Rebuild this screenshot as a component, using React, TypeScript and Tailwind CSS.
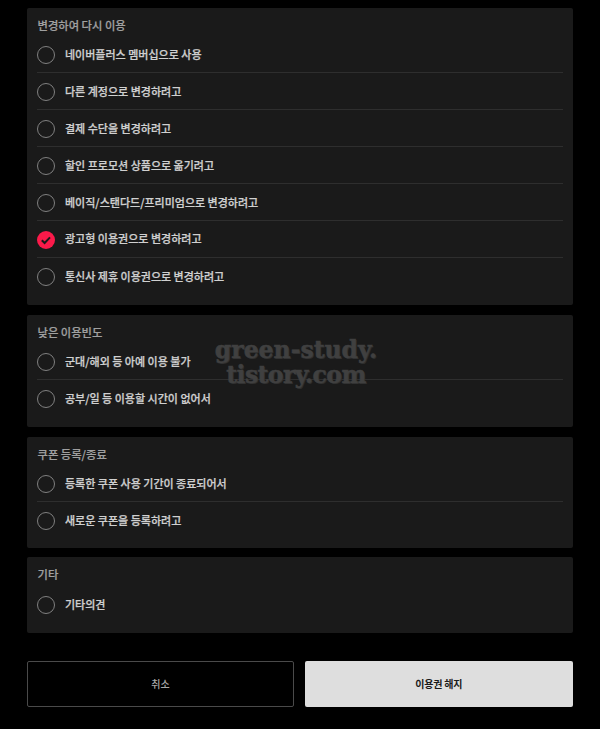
const sections = [
  {
    title: "변경하여 다시 이용",
    pb: "pb-[10.5px]",
    items: [
      "네이버플러스 멤버십으로 사용",
      "다른 계정으로 변경하려고",
      "결제 수단을 변경하려고",
      "할인 프로모션 상품으로 옮기려고",
      "베이직/스탠다드/프리미엄으로 변경하려고",
      "광고형 이용권으로 변경하려고",
      "통신사 제휴 이용권으로 변경하려고",
    ],
  },
  {
    title: "낮은 이용빈도",
    pb: "pb-[10.5px]",
    items: ["군대/해외 등 아예 이용 불가", "공부/일 등 이용할 시간이 없어서"],
  },
  {
    title: "쿠폰 등록/종료",
    pb: "pb-[9px]",
    items: ["등록한 쿠폰 사용 기간이 종료되어서", "새로운 쿠폰을 등록하려고"],
  },
  {
    title: "기타",
    pb: "pb-[10px]",
    items: ["기타의견"],
  },
]

const CHECKED = "광고형 이용권으로 변경하려고"

function Radio({ checked }: { checked: boolean }) {
  if (checked) {
    return (
      <svg width="18" height="18" viewBox="0 0 18 18" className="shrink-0">
        <circle cx="9" cy="9" r="9" fill="#fb1a4a" />
        <path d="M4.8 9.2l2.8 2.8 5.4-5.6" fill="none" stroke="#1a1a1a" strokeWidth="2" />
      </svg>
    )
  }
  return <span className="w-[18px] h-[18px] shrink-0 rounded-full border border-[#808080]" />
}

export default function App() {
  return (
    <div
      className="relative w-[600px] h-[729px] bg-black overflow-hidden"
      style={{ fontFamily: '"Noto Sans CJK KR", "Noto Sans", sans-serif' }}
    >
      <div className="flex flex-col gap-[9.4px] pt-2 px-[27px]">
        {sections.map((section) => (
          <div key={section.title} className={`bg-[#1a1a1a] rounded-[2px] px-[10px] pt-[9px] ${section.pb}`}>
            <h3 className="text-[11.3px] leading-4 font-medium text-[#a0a0a0] pl-[0.5px] mb-[3.5px] [-webkit-text-stroke:0.2px_#a0a0a0]">
              {section.title}
            </h3>
            <ul>
              {section.items.map((item, i) => (
                <li
                  key={item}
                  className={`h-[36.9px] pt-[1.5px] flex items-center gap-[10px] ${
                    i < section.items.length - 1 ? "border-b border-[#2e2e2e]" : ""
                  }`}
                >
                  <Radio checked={item === CHECKED} />
                  <span className="text-[11px] font-medium text-[#d0d0d0] -mt-[2px] [-webkit-text-stroke:0.25px_#d0d0d0]">
                    {item}
                  </span>
                </li>
              ))}
            </ul>
          </div>
        ))}
      </div>

      <div className="flex gap-[11px] pl-[27px] mt-[28px]">
        <button className="w-[267px] h-[46px] rounded-[2px] border border-[#4a4a4a] bg-black text-[10px] font-medium text-[#a8a8a8]">
          취소
        </button>
        <button className="w-[267.5px] h-[46px] rounded-[2px] bg-[#dedede] text-[10px] font-bold text-[#1a1a1a] tracking-[-0.2px]">
          이용권 해지
        </button>
      </div>

      <div
        className="absolute left-[196px] top-[338px] w-[200px] text-center text-[23.5px] leading-[25px] font-bold text-[#404040] [-webkit-text-stroke:0.5px_#404040] [text-shadow:1px_1px_0_#2e2e2e]"
        style={{ fontFamily: '"DejaVu Serif", serif' }}
      >
        green-study.
        <br />
        <span className="tracking-[-0.6px]">tistory.com</span>
      </div>
    </div>
  )
}
